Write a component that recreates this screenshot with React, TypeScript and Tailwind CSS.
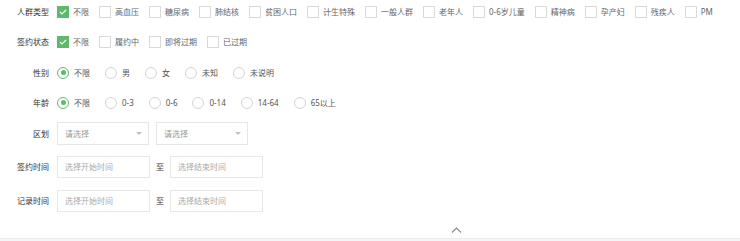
import React from 'react'

const GREEN = 'bg-[#5fb96b]'

const Check = ({ on, label }: { on?: boolean; label: string }) => (
  <label className="flex items-center mr-[10px] shrink-0">
    {on ? (
      <span className={`w-[12px] h-[12px] ${GREEN} flex items-center justify-center`}>
        <svg width="8" height="6" viewBox="0 0 8 6" fill="none">
          <path d="M1 3l2 2 4-4" stroke="#fff" strokeWidth="1.1" />
        </svg>
      </span>
    ) : (
      <span className="w-[12px] h-[12px] border border-[#d9d9d9] bg-white" />
    )}
    <span className="ml-[4px] text-[#666]">{label}</span>
  </label>
)

const Radio = ({ on, label }: { on?: boolean; label: string }) => (
  <label className="flex items-center mr-[15px] shrink-0">
    {on ? (
      <span className="w-[12px] h-[12px] rounded-full border border-[#5fb96b] flex items-center justify-center">
        <span className={`w-[5px] h-[5px] rounded-full ${GREEN}`} />
      </span>
    ) : (
      <span className="w-[12px] h-[12px] rounded-full border border-[#d4d4d4]" />
    )}
    <span className="ml-[5px] text-[#555]">{label}</span>
  </label>
)

const Row = ({ label, children, className = '' }: { label: string; children: React.ReactNode; className?: string }) => (
  <div className={`flex items-center ${className}`}>
    <div className="w-[49px] text-right text-[#333] shrink-0">{label}</div>
    <div className="flex items-center ml-[8px]">{children}</div>
  </div>
)

const Select = () => (
  <div className="w-[92px] h-[23px] border border-[#e6e6e6] flex items-center justify-between pl-[7px] pr-[6px] text-[#999]">
    <span>请选择</span>
    <span className="w-0 h-0 border-l-[3px] border-r-[3px] border-t-[3px] border-l-transparent border-r-transparent border-t-[#c0c0c0]" />
  </div>
)

const DateBox = ({ text }: { text: string }) => (
  <div className="w-[93px] h-[22px] border border-[#e8e8e8] flex items-center pl-[7px] text-[#aaa]">{text}</div>
)

const DateRange = () => (
  <>
    <DateBox text="选择开始时间" />
    <span className="mx-[6px] text-[#333]">至</span>
    <DateBox text="选择结束时间" />
  </>
)

export default function App() {
  const crowds = ['高血压', '糖尿病', '肺结核', '贫困人口', '计生特殊', '一般人群', '老年人', '0-6岁儿童', '精神病', '孕产妇', '残疾人', 'PM']
  return (
    <div
      className="w-[740px] h-[241px] bg-white text-[8px] leading-none flex flex-col overflow-hidden"
      style={{ fontFamily: '"Noto Sans", "Noto Sans CJK SC", sans-serif' }}
    >
      <Row label="人群类型" className="h-[23px]">
        <Check on label="不限" />
        {crowds.map((c) => (
          <Check key={c} label={c} />
        ))}
      </Row>
      <Row label="签约状态" className="h-[23px] mt-[7px]">
        <Check on label="不限" />
        <Check label="履约中" />
        <Check label="即将过期" />
        <Check label="已过期" />
      </Row>
      <Row label="性别" className="h-[23px] mt-[8px]">
        <Radio on label="不限" />
        <Radio label="男" />
        <Radio label="女" />
        <Radio label="未知" />
        <Radio label="未说明" />
      </Row>
      <Row label="年龄" className="h-[23px] mt-[7px]">
        <Radio on label="不限" />
        <Radio label="0-3" />
        <Radio label="0-6" />
        <Radio label="0-14" />
        <Radio label="14-64" />
        <Radio label="65以上" />
      </Row>
      <Row label="区划" className="h-[23px] mt-[8px]">
        <Select />
        <div className="ml-[7px]">
          <Select />
        </div>
      </Row>
      <Row label="签约时间" className="h-[22px] mt-[11px]">
        <DateRange />
      </Row>
      <Row label="记录时间" className="h-[22px] mt-[12px]">
        <DateRange />
      </Row>
      <div className="flex mt-[15px] h-[11px] pl-[451px]">
        <svg width="11" height="6" viewBox="0 0 11 6" fill="none">
          <path d="M1 5.5l4.5-4.5 4.5 4.5" stroke="#8a8a8a" strokeWidth="1.1" />
        </svg>
      </div>
      <div className="flex-1 bg-[#f4f5f6] border-t border-[#ececec]" />
    </div>
  )
}
